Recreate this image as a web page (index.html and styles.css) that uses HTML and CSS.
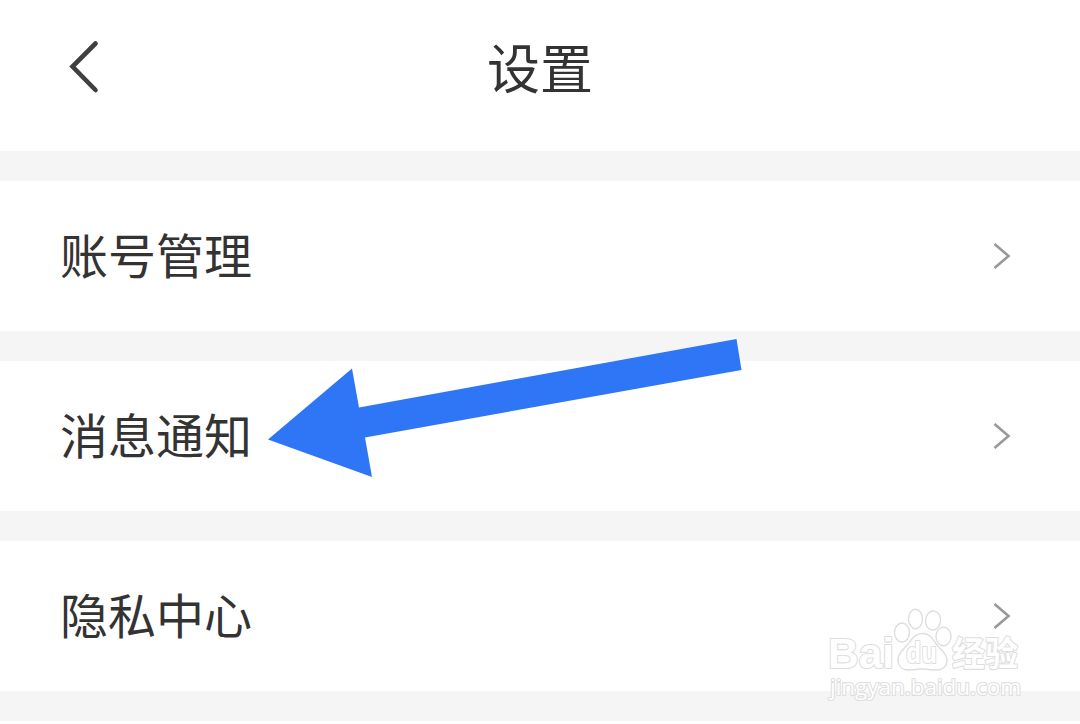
FILE: index.html
```html
<!DOCTYPE html>
<html lang="zh-CN">
<head>
  <meta charset="UTF-8">
  <meta name="viewport" content="width=device-width, initial-scale=1.0">
  <title>设置</title>
  <link rel="stylesheet" href="styles.css">
</head>
<body>
  <header>
    <svg class="back" viewBox="0 0 34 56">
      <path d="M28.5 4.5 L5.5 27.5 L28.5 51" />
    </svg>
    <h1>设置</h1>
  </header>

  <main>
    <ul class="settings">
      <li>
        <span>账号管理</span>
        <svg class="chevron" viewBox="0 0 20 30"><path d="M3.5 3 L17.5 15 L3.5 27" /></svg>
      </li>
      <li>
        <span>消息通知</span>
        <svg class="chevron" viewBox="0 0 20 30"><path d="M3.5 3 L17.5 15 L3.5 27" /></svg>
      </li>
      <li>
        <span>隐私中心</span>
        <svg class="chevron" viewBox="0 0 20 30"><path d="M3.5 3 L17.5 15 L3.5 27" /></svg>
      </li>
    </ul>
  </main>

  <!-- Arrow pointing at the notification row -->
  <svg class="arrow" viewBox="0 0 476 140">
    <polygon points="0,101.5 84,30.5 91,69.5 468.5,1 473.5,32 97,99.5 104,139" />
  </svg>

  <!-- Watermark -->
  <svg class="watermark" viewBox="0 0 230 134">
    <text class="brand" x="18" y="78" textLength="66" lengthAdjust="spacingAndGlyphs">Bai</text>
    <g class="paw">
      <ellipse cx="92" cy="42.5" rx="7.5" ry="9.5" />
      <ellipse cx="105.5" cy="29" rx="7" ry="9.7" />
      <ellipse cx="123" cy="30.5" rx="7.5" ry="9.5" transform="rotate(8 123 30.5)" />
      <ellipse cx="133.5" cy="46.5" rx="7.5" ry="9.3" />
      <path d="M112.5 43.5 C120 43.5 123 49 126 54 C130 59 137 63 137 70 C137 77 132 80 126 80 C120 80 117 79 112 79 C107 79 104 80 98 80 C92 80 88 76 88 69 C88 63 94 59 98 54 C102 49 105 43.5 112.5 43.5 Z" />
    </g>
    <text class="du" x="96" y="73" textLength="31" lengthAdjust="spacingAndGlyphs">du</text>
    <text class="cn" x="142" y="76" textLength="66" lengthAdjust="spacingAndGlyphs">经验</text>
    <text class="url" x="20" y="104.5" textLength="191" lengthAdjust="spacingAndGlyphs">jingyan.baidu.com</text>
  </svg>
</body>
</html>
```
FILE: styles.css
```css
body {
  margin: 0;
  background: #fff;
  color: #333;
  font-family: "Noto Sans CJK SC", sans-serif;
  position: relative;
  height: 724px;
  overflow: hidden;
}

header {
  display: grid;
  grid-template-columns: 120px 1fr 120px;
  align-items: center;
  height: 151px;
  box-sizing: border-box;
  padding-bottom: 11px;
}

header h1 {
  margin: 0;
  padding-bottom: 8px;
  font-size: 53px;
  line-height: 78px;
  font-weight: 400;
  text-align: center;
}

.back {
  width: 34px;
  height: 56px;
  margin: 0 0 6px 67px;
}

.back path {
  fill: none;
  stroke: #404040;
  stroke-width: 4.6;
  stroke-linecap: round;
}

.settings {
  list-style: none;
  margin: 0;
  padding: 0;
  border-bottom: 30px solid #f5f5f5;
}

.settings li {
  display: flex;
  align-items: center;
  justify-content: space-between;
  height: 150px;
  padding: 0 69px 0 60px;
  border-top: 30px solid #f5f5f5;
  font-size: 48px;
  line-height: 70px;
}

.settings span {
  padding-bottom: 7px;
}

.chevron {
  width: 20px;
  height: 30px;
}

.chevron path {
  fill: none;
  stroke: #999;
  stroke-width: 2.6;
}

.arrow {
  position: absolute;
  left: 268px;
  top: 338px;
  width: 476px;
  height: 140px;
  fill: #2e76f6;
}

.watermark {
  position: absolute;
  left: 810px;
  top: 590px;
  width: 230px;
  height: 134px;
  fill: #fff;
  stroke: #dedede;
  stroke-width: 1.4;
}

.watermark text {
  paint-order: stroke;
  stroke-width: 2.2;
  stroke-linejoin: round;
}

.brand {
  font: bold 43px "Liberation Sans", sans-serif;
}

.du {
  font: bold 28px "Open Sans", sans-serif;
}

.cn {
  font: bold 34px "Noto Sans CJK SC", sans-serif;
}

.url {
  font: 22px "Open Sans", sans-serif;
}
```
